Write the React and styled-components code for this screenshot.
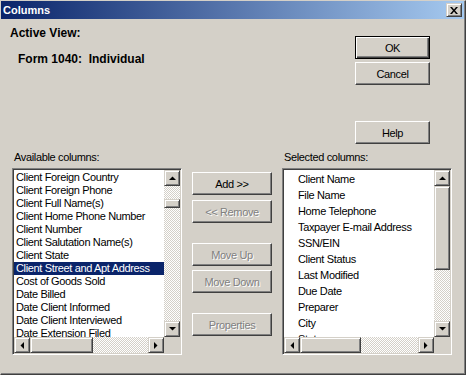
import React from 'react'
import styled, { createGlobalStyle, css } from 'styled-components'

const GlobalStyle = createGlobalStyle`
  html, body {
    margin: 0;
    background: #ffffff;
  }
  body {
    font-family: "Liberation Sans", Arial, sans-serif;
    font-size: 11px;
  }
`

const FACE = '#d4d0c8'
const SHADOW = '#808080'
const DARK = '#404040'

const availableColumns = [
  'Client Foreign Country',
  'Client Foreign Phone',
  'Client Full Name(s)',
  'Client Home Phone Number',
  'Client Number',
  'Client Salutation Name(s)',
  'Client State',
  'Client Street and Apt Address',
  'Cost of Goods Sold',
  'Date Billed',
  'Date Client Informed',
  'Date Client Interviewed',
  'Date Extension Filed',
]

const selectedColumns = [
  'Client Name',
  'File Name',
  'Home Telephone',
  'Taxpayer E-mail Address',
  'SSN/EIN',
  'Client Status',
  'Last Modified',
  'Due Date',
  'Preparer',
  'City',
  'State',
]

function Arrow({ dir }) {
  const points = {
    up: '0,4 7,4 3.5,0.5',
    down: '0,0 7,0 3.5,3.5',
    left: '4,0 4,7 0.5,3.5',
    right: '0,0 0,7 3.5,3.5',
  }[dir]
  const vertical = dir === 'up' || dir === 'down'
  return (
    <svg width={vertical ? 7 : 4} height={vertical ? 4 : 7} viewBox={vertical ? '0 0 7 4' : '0 0 4 7'}>
      <polygon points={points} fill="#000" />
    </svg>
  )
}

function CloseGlyph() {
  return (
    <svg width="8" height="7" viewBox="0 0 8 7">
      <path d="M0 0h2l2 2.5L6 0h2L5 3.5 8 7H6L4 4.5 2 7H0l3-3.5z" fill="#000" />
    </svg>
  )
}

function ScrollBar({ vertical, offset, size }) {
  return (
    <Bar $vertical={vertical}>
      <ArrowButton>
        <Arrow dir={vertical ? 'up' : 'left'} />
      </ArrowButton>
      <Track $vertical={vertical}>
        <Thumb $vertical={vertical} $offset={offset} $size={size} />
      </Track>
      <ArrowButton>
        <Arrow dir={vertical ? 'down' : 'right'} />
      </ArrowButton>
    </Bar>
  )
}

function ListBox({ items, selected, rowHeight, indent, vThumb, hThumb }) {
  return (
    <ListFrame>
      <ListItems>
        {items.map((item, i) => (
          <ListItem key={item} $selected={i === selected} $height={rowHeight} $indent={indent}>
            {item}
          </ListItem>
        ))}
      </ListItems>
      <ScrollBar vertical offset={vThumb[0]} size={vThumb[1]} />
      <ScrollBar offset={hThumb[0]} size={hThumb[1]} />
      <Corner />
    </ListFrame>
  )
}

export default function App() {
  return (
    <>
      <GlobalStyle />
      <Dialog>
        <TitleBar>
          <Title>Columns</Title>
          <CloseButton>
            <CloseGlyph />
          </CloseButton>
        </TitleBar>
        <TopArea>
          <Info>
            <Heading>Active View:</Heading>
            <ViewName>Form 1040:&nbsp;&nbsp;Individual</ViewName>
          </Info>
          <DialogButtons>
            <PushButton $width={75} $default>OK</PushButton>
            <PushButton $width={75} $gap={3}>Cancel</PushButton>
            <PushButton $width={75} $gap={36}>Help</PushButton>
          </DialogButtons>
        </TopArea>
        <ColumnsArea>
          <ListColumn>
            <Label>Available columns:</Label>
            <ListBox
              items={availableColumns}
              selected={7}
              rowHeight={13}
              indent={2}
              vThumb={[13, 9]}
              hThumb={[0, 63]}
            />
          </ListColumn>
          <MiddleButtons>
            <PushButton $width={80}>Add &gt;&gt;</PushButton>
            <PushButton $width={80} $gap={5} disabled>&lt;&lt; Remove</PushButton>
            <PushButton $width={80} $gap={20} disabled>Move Up</PushButton>
            <PushButton $width={80} $gap={4} disabled>Move Down</PushButton>
            <PushButton $width={80} $gap={20} disabled>Properties</PushButton>
          </MiddleButtons>
          <ListColumn>
            <Label>Selected columns:</Label>
            <ListBox
              items={selectedColumns}
              selected={-1}
              rowHeight={16}
              indent={14}
              vThumb={[0, 84]}
              hThumb={[0, 61]}
            />
          </ListColumn>
        </ColumnsArea>
      </Dialog>
    </>
  )
}

const Dialog = styled.div`
  width: 466px;
  height: 375px;
  box-sizing: border-box;
  background: ${FACE};
  border: 1px solid;
  border-color: ${FACE} ${DARK} ${DARK} ${FACE};
  box-shadow: inset -1px -1px ${SHADOW};
  display: flex;
  flex-direction: column;
  font-family: "Liberation Sans", Arial, sans-serif;
  color: #000;
`

const TitleBar = styled.div`
  height: 18px;
  margin-right: 1px;
  padding: 0 2px;
  display: flex;
  align-items: center;
  justify-content: space-between;
  background: linear-gradient(to right, #0a246a, #a6caf0);
`

const Title = styled.span`
  color: #fff;
  font-size: 11px;
  font-weight: bold;
  line-height: 13px;
`

const raised = css`
  border: 1px solid;
  border-color: ${FACE} ${DARK} ${DARK} ${FACE};
  box-shadow: inset 1px 1px #fff, inset -1px -1px ${SHADOW};
`

const CloseButton = styled.div`
  width: 16px;
  height: 14px;
  box-sizing: border-box;
  background: ${FACE};
  ${raised};
  display: flex;
  align-items: center;
  justify-content: center;
`

const TopArea = styled.div`
  height: 132px;
  padding: 0 35px 0 9px;
  display: flex;
  justify-content: space-between;
`

const Info = styled.div`
  padding-top: 7px;
  display: flex;
  flex-direction: column;
  align-items: flex-start;
`

const Heading = styled.div`
  font-size: 12px;
  font-weight: bold;
  line-height: 14px;
`

const ViewName = styled(Heading)`
  margin: 12px 0 0 8px;
`

const DialogButtons = styled.div`
  padding-top: 17px;
  display: flex;
  flex-direction: column;
`

const PushButton = styled.button`
  width: ${p => p.$width}px;
  height: 23px;
  margin-top: ${p => p.$gap || 0}px;
  padding: 0;
  box-sizing: border-box;
  background: ${FACE};
  color: #000;
  font-family: "Liberation Sans", Arial, sans-serif;
  font-size: 11px;
  letter-spacing: -0.35px;
  border: 1px solid;
  border-color: #fff ${DARK} ${DARK} #fff;
  box-shadow: inset -1px -1px ${SHADOW};
  border-radius: 0;
  outline: none;

  ${p => p.$default && css`
    border-color: #000;
    box-shadow: inset 1px 1px #fff, inset -1px -1px ${DARK}, inset -2px -2px ${SHADOW};
  `}

  &:disabled {
    color: ${SHADOW};
    text-shadow: 1px 1px #fff;
  }
`

const ColumnsArea = styled.div`
  padding-left: 11px;
  display: flex;
  gap: 10px;
`

const ListColumn = styled.div`
  width: 170px;
  display: flex;
  flex-direction: column;
`

const Label = styled.div`
  font-size: 11px;
  letter-spacing: -0.35px;
  line-height: 13px;
  padding-left: 2px;
  margin-bottom: 4px;
`

const MiddleButtons = styled.div`
  padding-top: 21px;
  display: flex;
  flex-direction: column;
`

const ListFrame = styled.div`
  height: 187px;
  box-sizing: border-box;
  padding: 1px;
  background: #fff;
  border: 1px solid;
  border-color: ${SHADOW} #fff #fff ${SHADOW};
  box-shadow: inset 1px 1px ${DARK}, inset -1px -1px ${FACE};
  display: grid;
  grid-template-columns: 1fr 16px;
  grid-template-rows: 1fr 16px;
`

const ListItems = styled.div`
  overflow: hidden;
  padding-top: 1px;
  min-width: 0;
`

const ListItem = styled.div`
  height: ${p => p.$height}px;
  line-height: ${p => p.$height}px;
  padding-left: ${p => p.$indent}px;
  font-size: 11px;
  letter-spacing: -0.35px;
  white-space: nowrap;
  ${p => p.$selected && css`
    background: #0a246a;
    color: #fff;
  `}
`

const Bar = styled.div`
  display: flex;
  flex-direction: ${p => (p.$vertical ? 'column' : 'row')};
`

const ArrowButton = styled.div`
  width: 16px;
  height: 16px;
  flex: none;
  box-sizing: border-box;
  background: ${FACE};
  ${raised};
  display: flex;
  align-items: center;
  justify-content: center;
`

const Track = styled.div`
  flex: 1;
  display: flex;
  flex-direction: ${p => (p.$vertical ? 'column' : 'row')};
  background: repeating-conic-gradient(#fff 0 25%, ${FACE} 0 50%) 0 0 / 2px 2px;
`

const Thumb = styled.div`
  flex: none;
  box-sizing: border-box;
  background: ${FACE};
  ${raised};
  ${p => (p.$vertical
    ? css`margin-top: ${p.$offset}px; height: ${p.$size}px;`
    : css`margin-left: ${p.$offset}px; width: ${p.$size}px;`)}
`

const Corner = styled.div`
  background: ${FACE};
`
